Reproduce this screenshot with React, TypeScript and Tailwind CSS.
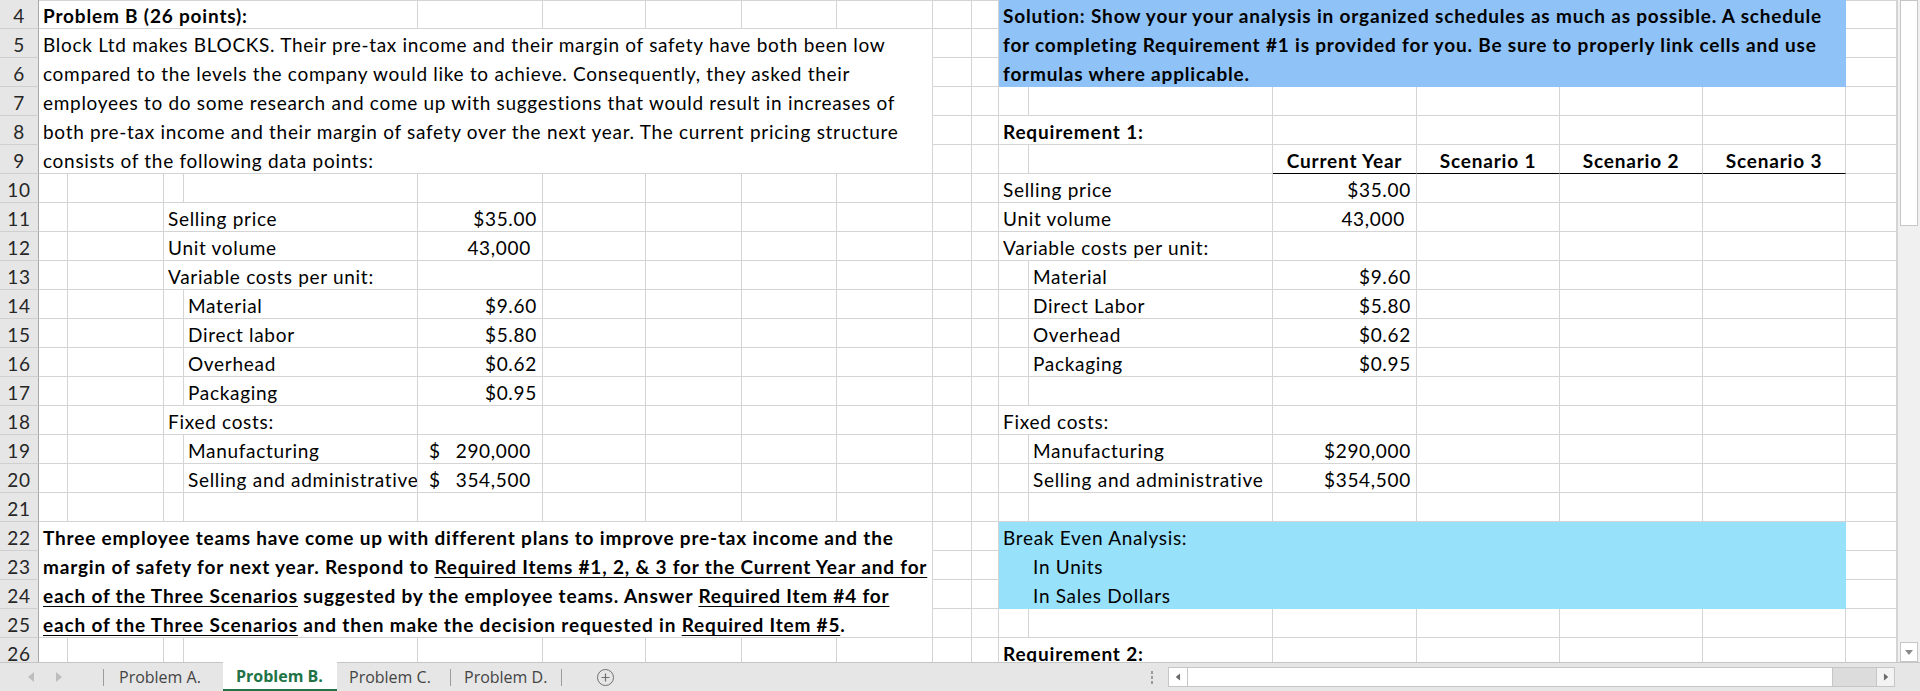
import type { ReactNode } from "react";

// Column widths (px): row header, A..R
const GRID =
  "grid grid-cols-[39px_29px_96px_20px_234px_125px_103px_96px_95px_96px_39px_27px_30px_244px_144px_143px_143px_143px_51px] auto-rows-[29px]";

const GRIDLINE = "border-r border-b border-[#d4d4d4]";
const BOLD = "font-bold tracking-[0.82px]";

const SPAN: Record<number, string> = {
  1: "",
  2: "col-span-2",
  4: "col-span-4",
  6: "col-span-6",
  9: "col-span-9",
};
const RSPAN: Record<number, string> = {
  1: "",
  3: "row-span-3",
  4: "row-span-4",
  5: "row-span-5",
};

type Spec = { c: number; span?: number; rows?: number; body?: ReactNode; cls?: string };
type Row = { n: number; skip?: number[]; cells?: Spec[] };

const range = (a: number, b: number) => Array.from({ length: b - a + 1 }, (_, i) => a + i);

function Line({ children, cls = "" }: { children?: ReactNode; cls?: string }) {
  return <div className={"h-[29px] pt-[2px] leading-[27px] whitespace-nowrap " + cls}>{children}</div>;
}

const txt = (t: ReactNode, cls = "") => <Line cls={"pl-[4px] " + cls}>{t}</Line>;
const num = (t: string, cls = "pr-[5px]") => <Line cls={"text-right " + cls}>{t}</Line>;
const acct = (t: string) => (
  <Line cls="flex justify-between pl-[11px] pr-[11px]">
    <span>$</span>
    <span>{t}</span>
  </Line>
);

function U({ children }: { children: ReactNode }) {
  return <span className="underline decoration-1 underline-offset-[3px]">{children}</span>;
}

const intro = [
  "Block Ltd makes BLOCKS. Their pre-tax income and their margin of safety have both been low",
  "compared to the levels the company would like to achieve. Consequently, they asked their",
  "employees to do some research and come up with suggestions that would result in increases of",
  "both pre-tax income and their margin of safety over the next year. The current pricing structure",
  "consists of the following data points:",
];

const solution = [
  "Solution: Show your your analysis in organized schedules as much as possible. A schedule",
  "for completing Requirement #1 is provided for you. Be sure to properly link cells and use",
  "formulas where applicable.",
];

const teams: ReactNode[] = [
  <>Three employee teams have come up with different plans to improve pre-tax income and the</>,
  <>
    margin of safety for next year. Respond to <U>Required Items #1, 2, &amp; 3 for the Current Year and for</U>
  </>,
  <>
    <U>each of the Three Scenarios</U> suggested by the employee teams. Answer <U>Required Item #4 for </U>
  </>,
  <>
    <U>each of the Three Scenarios</U> and then make the decision requested in <U>Required Item #5</U>.
  </>,
];

const HEAD = BOLD + " text-center border-b-black";

const ROWS: Row[] = [
  {
    n: 4,
    cells: [
      { c: 1, span: 4, body: txt("Problem B (26 points):", BOLD) },
      {
        c: 12,
        span: 6,
        rows: 3,
        cls: "bg-[#8fc3f7] border-r border-b border-transparent",
        body: solution.map((s) => txt(s, BOLD)),
      },
    ],
  },
  {
    n: 5,
    skip: range(12, 17),
    cells: [{ c: 1, span: 9, rows: 5, body: intro.map((s) => txt(s)) }],
  },
  { n: 6, skip: [...range(1, 9), ...range(12, 17)] },
  { n: 7, skip: range(1, 9) },
  { n: 8, skip: range(1, 9), cells: [{ c: 12, span: 2, body: txt("Requirement 1:", BOLD) }] },
  {
    n: 9,
    skip: range(1, 9),
    cells: [
      { c: 14, body: <Line>Current Year</Line>, cls: GRIDLINE + " " + HEAD },
      { c: 15, body: <Line>Scenario 1</Line>, cls: GRIDLINE + " " + HEAD },
      { c: 16, body: <Line>Scenario 2</Line>, cls: GRIDLINE + " " + HEAD },
      { c: 17, body: <Line>Scenario 3</Line>, cls: GRIDLINE + " " + HEAD },
    ],
  },
  {
    n: 10,
    cells: [
      { c: 12, span: 2, body: txt("Selling price") },
      { c: 14, body: num("$35.00") },
    ],
  },
  {
    n: 11,
    cells: [
      { c: 3, span: 2, body: txt("Selling price") },
      { c: 5, body: num("$35.00") },
      { c: 12, span: 2, body: txt("Unit volume") },
      { c: 14, body: num("43,000", "pr-[11px]") },
    ],
  },
  {
    n: 12,
    cells: [
      { c: 3, span: 2, body: txt("Unit volume") },
      { c: 5, body: num("43,000", "pr-[11px]") },
      { c: 12, span: 2, body: txt("Variable costs per unit:") },
    ],
  },
  {
    n: 13,
    cells: [
      { c: 3, span: 2, body: txt("Variable costs per unit:") },
      { c: 13, body: txt("Material") },
      { c: 14, body: num("$9.60") },
    ],
  },
  {
    n: 14,
    cells: [
      { c: 4, body: txt("Material") },
      { c: 5, body: num("$9.60") },
      { c: 13, body: txt("Direct Labor") },
      { c: 14, body: num("$5.80") },
    ],
  },
  {
    n: 15,
    cells: [
      { c: 4, body: txt("Direct labor") },
      { c: 5, body: num("$5.80") },
      { c: 13, body: txt("Overhead") },
      { c: 14, body: num("$0.62") },
    ],
  },
  {
    n: 16,
    cells: [
      { c: 4, body: txt("Overhead") },
      { c: 5, body: num("$0.62") },
      { c: 13, body: txt("Packaging") },
      { c: 14, body: num("$0.95") },
    ],
  },
  {
    n: 17,
    cells: [
      { c: 4, body: txt("Packaging") },
      { c: 5, body: num("$0.95") },
    ],
  },
  {
    n: 18,
    cells: [
      { c: 3, span: 2, body: txt("Fixed costs:") },
      { c: 12, span: 2, body: txt("Fixed costs:") },
    ],
  },
  {
    n: 19,
    cells: [
      { c: 4, body: txt("Manufacturing") },
      { c: 5, body: acct("290,000") },
      { c: 13, body: txt("Manufacturing") },
      { c: 14, body: num("$290,000") },
    ],
  },
  {
    n: 20,
    cells: [
      { c: 4, body: txt("Selling and administrative") },
      { c: 5, body: acct("354,500") },
      { c: 13, body: txt("Selling and administrative") },
      { c: 14, body: num("$354,500") },
    ],
  },
  { n: 21 },
  {
    n: 22,
    cells: [
      { c: 1, span: 9, rows: 4, body: teams.map((t, i) => <div key={i}>{txt(t, BOLD)}</div>) },
      {
        c: 12,
        span: 6,
        rows: 3,
        cls: "bg-[#98e1fb] border-r border-b border-transparent",
        body: (
          <>
            {txt("Break Even Analysis:")}
            {txt("In Units", "pl-[34px]")}
            {txt("In Sales Dollars", "pl-[34px]")}
          </>
        ),
      },
    ],
  },
  { n: 23, skip: [...range(1, 9), ...range(12, 17)] },
  { n: 24, skip: [...range(1, 9), ...range(12, 17)] },
  { n: 25, skip: range(1, 9) },
  { n: 26, cells: [{ c: 12, span: 2, body: txt("Requirement 2:", BOLD) }] },
];

function Sheet() {
  const out: ReactNode[] = [];
  for (const row of ROWS) {
    out.push(
      <div
        key={`h${row.n}`}
        className="bg-[#e6e6e6] border-r border-r-[#a8a8a8] border-b border-b-[#cfcfcf] text-center text-[#262626]"
      >
        <Line>{row.n}</Line>
      </div>
    );
    let c = 1;
    while (c <= 18) {
      if (row.skip?.includes(c)) {
        c++;
        continue;
      }
      const s = row.cells?.find((x) => x.c === c);
      if (s) {
        const span = s.span ?? 1;
        out.push(
          <div
            key={`${row.n}-${c}`}
            className={`${SPAN[span]} ${RSPAN[s.rows ?? 1]} ${s.cls ?? GRIDLINE} overflow-hidden`}
          >
            {s.body}
          </div>
        );
        c += span;
      } else {
        out.push(<div key={`${row.n}-${c}`} className={GRIDLINE} />);
        c++;
      }
    }
  }
  return (
    <div className="h-[662px] flex-1 overflow-hidden shadow-[inset_0_1px_0_#d4d4d4]">
      <div className={GRID}>{out}</div>
    </div>
  );
}

function Tri({ dir, color, cls = "" }: { dir: "l" | "r" | "d"; color: string; cls?: string }) {
  const pts = dir === "l" ? "6,0 6,10 0,5" : dir === "r" ? "0,0 0,10 6,5" : "0,0 8,0 4,5";
  const w = dir === "d" ? 8 : 6;
  const h = dir === "d" ? 5 : 10;
  return (
    <svg width={w} height={h} viewBox={`0 0 ${w} ${h}`} className={cls}>
      <polygon points={pts} fill={color} />
    </svg>
  );
}

function VScroll() {
  return (
    <div className="w-[23px] h-[662px] bg-[#f0f0f0] border-l border-[#d4d4d4] flex flex-col items-center">
      <div className="w-[18px] h-[226px] bg-white border border-[#c6c6c6]" />
      <div className="flex-1" />
      <div className="w-[18px] h-[20px] bg-white border border-[#c6c6c6] flex items-center justify-center">
        <Tri dir="d" color="#8a8a8a" />
      </div>
    </div>
  );
}

function Sep() {
  return <div className="w-px h-[17px] self-center bg-[#9c9c9c]" />;
}

function TabBar() {
  return (
    <div className="h-[29px] bg-[#e6e6e6] border-t border-[#c6c6c6] flex items-stretch font-['Open_Sans',sans-serif] text-[16px] tracking-normal text-[#444]">
      <div className="w-[103px] flex items-center">
        <Tri dir="l" color="#bdbdbd" cls="ml-[28px]" />
        <Tri dir="r" color="#bdbdbd" cls="ml-[22px]" />
      </div>
      <Sep />
      <div className="w-[119px] flex items-center pl-[15px]">Problem A.</div>
      <div className="w-[114px] -mt-px bg-white flex items-center pl-[13px] font-bold text-[#217346] border-b-2 border-[#217346]">
        Problem B.
      </div>
      <div className="w-[113px] flex items-center pl-[12px]">Problem C.</div>
      <Sep />
      <div className="w-[110px] flex items-center pl-[13px]">Problem D.</div>
      <Sep />
      <div className="ml-[35px] self-center w-[17px] h-[17px] rounded-full border border-[#6e6e6e] flex items-center justify-center">
        <svg width="9" height="9" viewBox="0 0 9 9">
          <path d="M4.5 0.5v8M0.5 4.5h8" stroke="#6e6e6e" strokeWidth="1.2" />
        </svg>
      </div>
      <div className="ml-auto flex items-center">
        <div className="flex flex-col gap-[2px]">
          <div className="w-[2px] h-[3px] bg-[#9a9a9a]" />
          <div className="w-[2px] h-[3px] bg-[#9a9a9a]" />
          <div className="w-[2px] h-[3px] bg-[#9a9a9a]" />
        </div>
        <div className="ml-[15px] w-[727px] h-[20px] flex border border-[#c6c6c6] bg-[#dcdcdc]">
          <div className="w-[19px] bg-white border-r border-[#c6c6c6] flex items-center justify-center">
            <Tri dir="l" color="#6a6a6a" cls="scale-75" />
          </div>
          <div className="flex-1 bg-white border-r border-[#c6c6c6]" />
          <div className="w-[43px]" />
          <div className="w-[18px] bg-[#f3f3f3] border-l border-[#c6c6c6] flex items-center justify-center">
            <Tri dir="r" color="#6a6a6a" cls="scale-75" />
          </div>
        </div>
        <div className="w-[25px]" />
      </div>
    </div>
  );
}

export default function App() {
  return (
    <div className="w-[1920px] h-[691px] overflow-hidden bg-white font-['Lato',sans-serif] text-[19px] tracking-[0.7px] text-black flex flex-col">
      <div className="flex">
        <Sheet />
        <VScroll />
      </div>
      <TabBar />
    </div>
  );
}
